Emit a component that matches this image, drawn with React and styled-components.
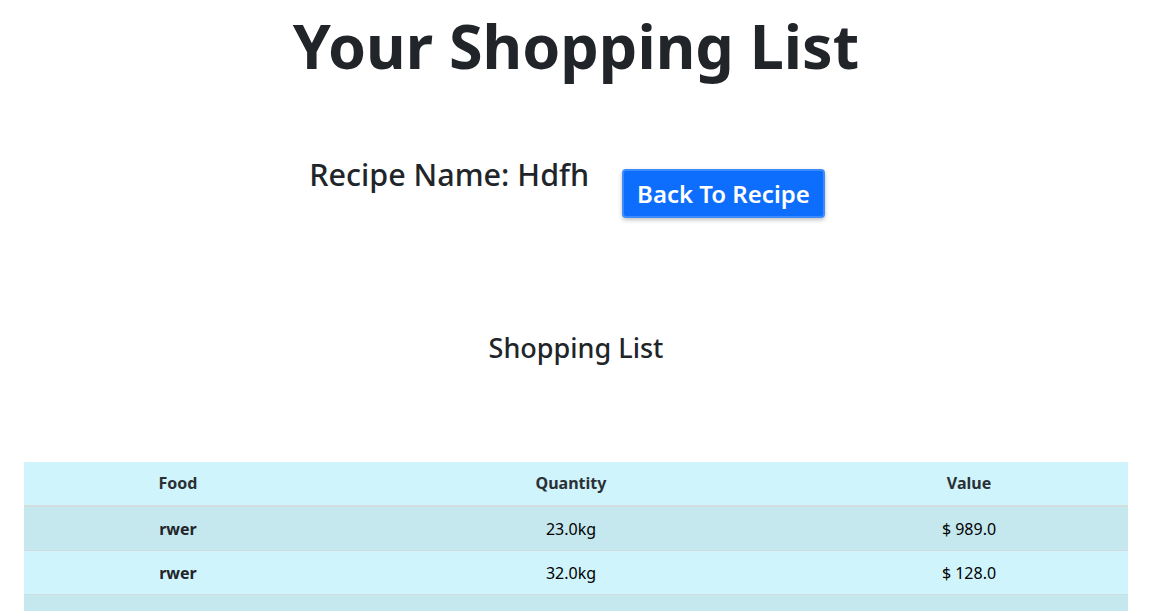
import React from "react";
import styled, { createGlobalStyle } from "styled-components";

const columns = [
  { label: "Food", width: 308 },
  { label: "Quantity", width: 478 },
  { label: "Value", width: 318 },
];

const items = [
  { food: "rwer", quantity: "23.0kg", value: "$ 989.0" },
  { food: "rwer", quantity: "32.0kg", value: "$ 128.0" },
  { food: "rwer", quantity: "12.0kg", value: "$ 100.0" },
];

const App = () => {
  return (
    <Page>
      <GlobalStyle />
      <Title>Your Shopping List</Title>
      <RecipeRow>
        <RecipeName>Recipe Name: Hdfh</RecipeName>
        <BackButton>Back To Recipe</BackButton>
      </RecipeRow>
      <SubTitle>Shopping List</SubTitle>
      <Table>
        <thead>
          <tr>
            {columns.map((col) => (
              <HeadCell key={col.label} $width={col.width}>
                {col.label}
              </HeadCell>
            ))}
          </tr>
        </thead>
        <tbody>
          {items.map((item, i) => (
            <Row key={i} $striped={i % 2 === 0}>
              <RowHead>{item.food}</RowHead>
              <Cell>{item.quantity}</Cell>
              <Cell>{item.value}</Cell>
            </Row>
          ))}
        </tbody>
      </Table>
    </Page>
  );
};

export default App;

const GlobalStyle = createGlobalStyle`
  body {
    margin: 0;
    font-family: "Noto Sans", "Open Sans", sans-serif;
    color: #212529;
    background: #fff;
  }
`;

const Page = styled.div`
  display: flex;
  flex-direction: column;
  align-items: center;
  padding: 0 29px 0 24px;
`;

const Title = styled.h1`
  margin: 9px 0 0;
  font-size: 61px;
  font-weight: 700;
  line-height: 1.2;
`;

const RecipeRow = styled.div`
  display: flex;
  align-items: flex-start;
  gap: 33px;
  margin-top: 74px;
  margin-right: 18px;
`;

const RecipeName = styled.h2`
  margin: 0;
  font-size: 30.5px;
  font-weight: 500;
  line-height: 1.2;
`;

const BackButton = styled.button`
  margin-top: 13px;
  padding: 6px 13px;
  font-family: inherit;
  font-size: 24px;
  font-weight: 600;
  color: #fff;
  background: #0d6efd;
  border: 2px solid #3d8bfd;
  border-radius: 4px;
  box-shadow: 0 2px 4px rgba(0, 0, 0, 0.25);
  cursor: pointer;
`;

const SubTitle = styled.h3`
  margin: 114px 0 0;
  font-size: 27px;
  font-weight: 500;
  line-height: 1.2;
`;

const Table = styled.table`
  width: 100%;
  margin-top: 97px;
  border-collapse: collapse;
  table-layout: fixed;
  background: #cff4fc;
  font-size: 16px;
  line-height: 24px;
`;

const HeadCell = styled.th`
  box-sizing: border-box;
  width: ${(p) => p.$width}px;
  padding: 9px 8px 10px;
  font-weight: 700;
  text-align: center;
  color: #2b3035;
  border-bottom: 2px solid #d3dcdf;
`;

const Row = styled.tr`
  background: ${(p) => (p.$striped ? "#c5e8ef" : "#cff4fc")};
  border-bottom: 1px solid #d3dcdf;
`;

const RowHead = styled.th`
  padding: 10px 8px 9px;
  font-weight: 700;
  text-align: center;
`;

const Cell = styled.td`
  padding: 10px 8px 9px;
  text-align: center;
  color: #000;
`;
